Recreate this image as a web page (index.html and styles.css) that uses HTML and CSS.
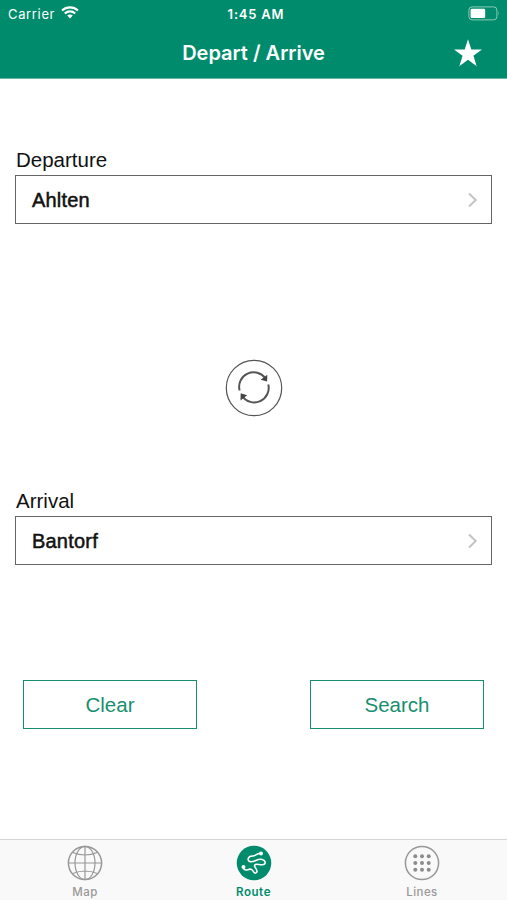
FILE: index.html
```html
<!DOCTYPE html>
<html lang="en">
<head>
<meta charset="utf-8">
<title>Depart / Arrive</title>
<link rel="stylesheet" href="styles.css">
</head>
<body>
<header class="header">
  <div class="status">
    <div class="status-left">
      <span class="carrier">Carrier</span>
      <svg class="wifi" width="18" height="13" viewBox="0 0 18 13" fill="none" stroke="#fff" stroke-width="2.1">
        <path d="M1 4.500C5.500.3 12.500.3 17 4.500M3.800 7.500C6.800 4.700 11.200 4.700 14.200 7.500"/>
        <path d="M6.200 9.600C7.800 8.200 10.200 8.200 11.800 9.600L9 12.500Z" fill="#fff" stroke="none"/>
      </svg>
    </div>
    <span class="time">1:45 AM</span>
    <svg class="battery" width="33" height="15" viewBox="0 0 33 15">
      <rect x=".9" y=".9" width="28" height="13" rx="3.200" fill="none" stroke="#8bcab8" stroke-width="1"/>
      <rect x="2.600" y="2.700" width="14.600" height="9.400" rx="1.300" fill="#fff"/>
      <path d="M30.500 5.200q1.800 2.200 0 4.400z" fill="#8bcab8"/>
    </svg>
  </div>
  <div class="nav">
    <h1 class="title">Depart / Arrive</h1>
    <svg class="star" width="30" height="28" viewBox="0 0 30 28"><path fill="#fff" d="M15 .3L18.300 10.500H29L20.400 16.800L23.700 27.200L15 20.800L6.300 27.200L9.600 16.800L1 10.500H11.700Z"/></svg>
  </div>
</header>
<main class="content">
  <div class="label">Departure</div>
  <div class="field"><span>Ahlten</span>
    <svg class="chevron" width="12" height="16" viewBox="0 0 12 16"><path d="M2 1.500L8.700 8L2 14.500" fill="none" stroke="#c4c4c6" stroke-width="2"/></svg>
  </div>
  <div class="swap">
    <svg width="58" height="58" viewBox="0 0 58 58" fill="none" stroke="#555">
      <circle cx="29" cy="29" r="27.700" stroke-width="1.200"/>
      <path d="M14.600 31.500A14.500 14.500 0 0 1 40.500 19.500M43.300 25.500A14.500 14.500 0 0 1 17.300 37.200" stroke-width="2"/>
      <path d="M42.300 15.700L42.100 22.500L35.700 20.800ZM15.500 41.500L15.700 34.300L22.100 36.300Z" fill="#444" stroke="none"/>
    </svg>
  </div>
  <div class="label">Arrival</div>
  <div class="field"><span>Bantorf</span>
    <svg class="chevron" width="12" height="16" viewBox="0 0 12 16"><path d="M2 1.500L8.700 8L2 14.500" fill="none" stroke="#c4c4c6" stroke-width="2"/></svg>
  </div>
  <div class="actions">
    <button class="button">Clear</button>
    <button class="button">Search</button>
  </div>
</main>
<nav class="tabs">
  <div class="tab">
    <svg width="36" height="36" viewBox="0 0 36 36" fill="none" stroke="#989898" stroke-width="1.200">
      <circle cx="18" cy="18" r="16.600" stroke-width="1.500"/>
      <ellipse cx="18" cy="18" rx="10" ry="16.600"/>
      <path d="M18 1.400V34.600M1.400 18H34.600M5.700 7.500Q18 12.500 30.300 7.500M5.700 28.500Q18 23.500 30.300 28.500"/>
    </svg>
    <span>Map</span>
  </div>
  <div class="tab active">
    <svg width="36" height="36" viewBox="0 0 36 36">
      <circle cx="18" cy="18" r="17.300" fill="#008c6c"/>
      <path d="M24.500 8.500C20.500 8 20.500 11 16.500 11C11.500 11 10.500 16.500 15 16.700C19 16.700 21 14 25 14.300C30 15 30.500 19.500 26.500 19.800C23 20 19.500 18 18.500 20.500C18.500 23 22.500 25 20.500 27.500C17.500 30 17.500 23.500 14 24C11 25.500 7.500 25.500 7.500 22.500" fill="none" stroke="#fff" stroke-width="1.600"/>
      <circle cx="25" cy="8.500" r="2" fill="#fff"/><circle cx="7.500" cy="22" r="2" fill="#fff"/>
    </svg>
    <span>Route</span>
  </div>
  <div class="tab">
    <svg width="36" height="36" viewBox="0 0 36 36" fill="#8c8c8c">
      <circle cx="18" cy="18" r="16.600" fill="none" stroke="#989898" stroke-width="1.500"/>
      <circle cx="11.300" cy="11.300" r="2"/><circle cx="18" cy="11.300" r="2"/><circle cx="24.700" cy="11.300" r="2"/>
      <circle cx="11.300" cy="18" r="2"/><circle cx="18" cy="18" r="2"/><circle cx="24.700" cy="18" r="2"/>
      <circle cx="11.300" cy="24.700" r="2"/><circle cx="18" cy="24.700" r="2"/><circle cx="24.700" cy="24.700" r="2"/>
    </svg>
    <span>Lines</span>
  </div>
</nav>
</body>
</html>
```
FILE: styles.css
```css
* { box-sizing: border-box; }
body {
  margin: 0;
  height: 900px;
  display: flex;
  flex-direction: column;
  overflow: hidden;
  background: #fff;
  color: #111;
  font-family: "Liberation Sans", Arial, sans-serif;
}
.header {
  height: 79px;
  flex: none;
  background: #008c6c;
  border-bottom: 1px solid #66b8a4;
  color: #fff;
  font-family: Inter, sans-serif;
}
.status {
  height: 27px;
  padding: 0 6px 0 8px;
  display: grid;
  grid-template-columns: 1fr auto 1fr;
  align-items: center;
  font-size: 13px;
}
.status-left { display: flex; align-items: center; gap: 6px; }
.carrier { letter-spacing: .65px; }
.wifi { margin-top: -2px; }
.time { margin-left: 3px; font-weight: 600; letter-spacing: .8px; }
.battery { justify-self: end; }
.nav {
  height: 51px;
  padding: 0 24px 0 54px;
  display: grid;
  grid-template-columns: 1fr 30px;
  align-items: center;
}
.title {
  margin: 0;
  text-align: center;
  font-size: 20px;
  line-height: 24px;
  font-weight: 600;
}
.star { margin-top: 1px; }
.content { flex: 1; padding: 70px 15px 0; }
.label { height: 26px; padding-left: 1px; line-height: 21px; font-size: 20.5px; }
.field {
  height: 49px;
  padding: 0 12px 0 16px;
  display: flex;
  align-items: center;
  justify-content: space-between;
  border: 1px solid #666;
  font-size: 20px;
  letter-spacing: .2px;
  -webkit-text-stroke: .5px #111;
}
.field span { padding-top: 2px; }
.swap {
  height: 266px;
  padding: 135px 0 0 1px;
  display: flex;
  justify-content: center;
  align-items: flex-start;
}
.actions {
  margin-top: 115px;
  padding: 0 8px;
  display: flex;
  justify-content: space-between;
}
.button {
  width: 174px;
  height: 49px;
  padding: 0;
  border: 1px solid #188e70;
  background: #fff;
  color: #188e70;
  font: 20.5px "Liberation Sans", Arial, sans-serif;
}
.tabs {
  height: 61px;
  flex: none;
  display: grid;
  grid-template-columns: repeat(3, 168.500px);
  justify-content: center;
  border-top: 1px solid #d4d4d4;
  background: #f9f9f9;
  font: 500 11.5px/14px Inter, sans-serif;
  color: #989898;
}
.tab {
  padding-top: 5px;
  display: flex;
  flex-direction: column;
  align-items: center;
  gap: 4px;
  letter-spacing: .4px;
}
.active { color: #008c6c; font-weight: 600; letter-spacing: .6px; }
```
